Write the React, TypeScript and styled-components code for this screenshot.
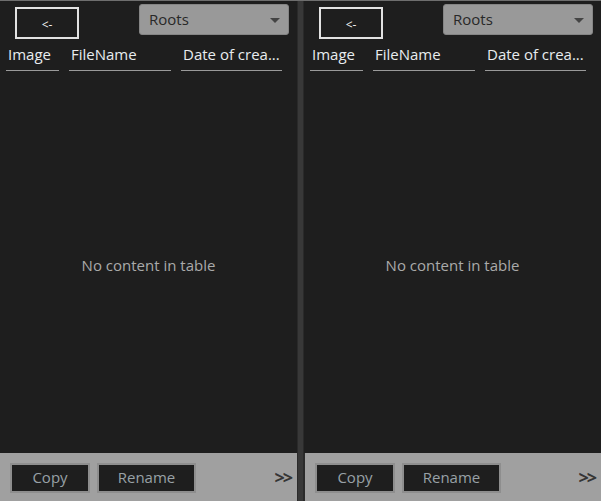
import * as React from 'react';
import styled, { createGlobalStyle } from 'styled-components';

//===============================
// @Styled
//===============================
const GlobalStyle = createGlobalStyle`
  html, body {
    margin: 0;
    padding: 0;
    background: #1e1e1e;
  }
  body {
    font-family: "Open Sans", "Noto Sans", sans-serif;
  }
`;

const Screen = styled.div`
  width: 601px;
  height: 501px;
  box-sizing: border-box;
  border-top: 1px solid #6e6e6e;
  display: grid;
  grid-template-columns: 297px 7px 297px;
  overflow: hidden;
`;

const Divider = styled.div`
  background: #383838;
  border-left: 1px solid #2a2a2a;
  border-right: 1px solid #2a2a2a;
`;

const Panel = styled.section`
  display: flex;
  flex-direction: column;
  background: #1e1e1e;
  min-height: 0;
`;

const TopBar = styled.div`
  display: flex;
  justify-content: space-between;
  align-items: flex-start;
  padding: 3px 8px 0 15px;
`;

const BackButton = styled.button`
  margin-top: 3px;
  width: 64px;
  height: 32px;
  box-sizing: border-box;
  border: 2px solid #e2e2e2;
  background: transparent;
  color: #f0f0f0;
  font-family: inherit;
  font-size: 12px;
  padding: 3px 0 0;
  cursor: pointer;
`;

const Select = styled.div`
  position: relative;
  width: 150px;
  height: 31px;
  box-sizing: border-box;
  border: 1px solid #858585;
  border-radius: 3px;
  background: #999999;
  color: #282828;
  font-size: 15px;
  line-height: 28px;
  padding-left: 9px;

  &::after {
    content: '';
    position: absolute;
    right: 8px;
    top: 13px;
    border-left: 5px solid transparent;
    border-right: 5px solid transparent;
    border-top: 5px solid #444;
  }
`;

const Columns = styled.div`
  display: grid;
  grid-template-columns: 53px 102px 101px;
  column-gap: 10px;
  padding: 5px 0 0 6px;
`;

const ColumnHead = styled.div`
  color: #e8ecef;
  font-size: 15px;
  line-height: 20px;
  padding: 0 0 6px 2px;
  border-bottom: 1px solid #9a9a9a;
  white-space: nowrap;
  overflow: hidden;
  text-overflow: ellipsis;
`;

const Body = styled.div`
  flex: 1;
  display: flex;
  align-items: center;
  justify-content: center;
  padding-top: 6px;
  color: #aaaaaa;
  font-size: 15px;
`;

const Footer = styled.div<{ $edge?: boolean }>`
  height: 47px;
  display: flex;
  align-items: center;
  gap: 7px;
  padding: 1px 7px 0 10px;
  background: #a0a0a0;
  border-left: ${(p) => (p.$edge ? '1px solid #2a2a2a' : 'none')};
`;

const FooterButton = styled.button<{ $width: number }>`
  width: ${(p) => p.$width}px;
  height: 30px;
  box-sizing: border-box;
  border: 2px solid #8e8e8e;
  background: #1e1e1e;
  color: #98a1a6;
  font-family: inherit;
  font-size: 15px;
  padding: 0 0 1px;
  cursor: pointer;
`;

const More = styled.span`
  margin-left: auto;
  margin-right: -1px;
  color: #353535;
  font-size: 18px;
  font-weight: 700;
  letter-spacing: -2px;
  padding-bottom: 2px;
`;

//===============================
// @Component
//===============================
const FilePanel: React.FC<{ edge?: boolean }> = ({ edge }) => (
  <Panel>
    <TopBar>
      <BackButton>&lt;-</BackButton>
      <Select>Roots</Select>
    </TopBar>
    <Columns>
      <ColumnHead>Image</ColumnHead>
      <ColumnHead>FileName</ColumnHead>
      <ColumnHead>Date of crea...</ColumnHead>
    </Columns>
    <Body>No content in table</Body>
    <Footer $edge={edge}>
      <FooterButton $width={80}>Copy</FooterButton>
      <FooterButton $width={99}>Rename</FooterButton>
      <More>&gt;&gt;</More>
    </Footer>
  </Panel>
);

const App: React.FC = () => (
  <>
    <GlobalStyle />
    <Screen>
      <FilePanel />
      <Divider />
      <FilePanel edge />
    </Screen>
  </>
);

export default App;
